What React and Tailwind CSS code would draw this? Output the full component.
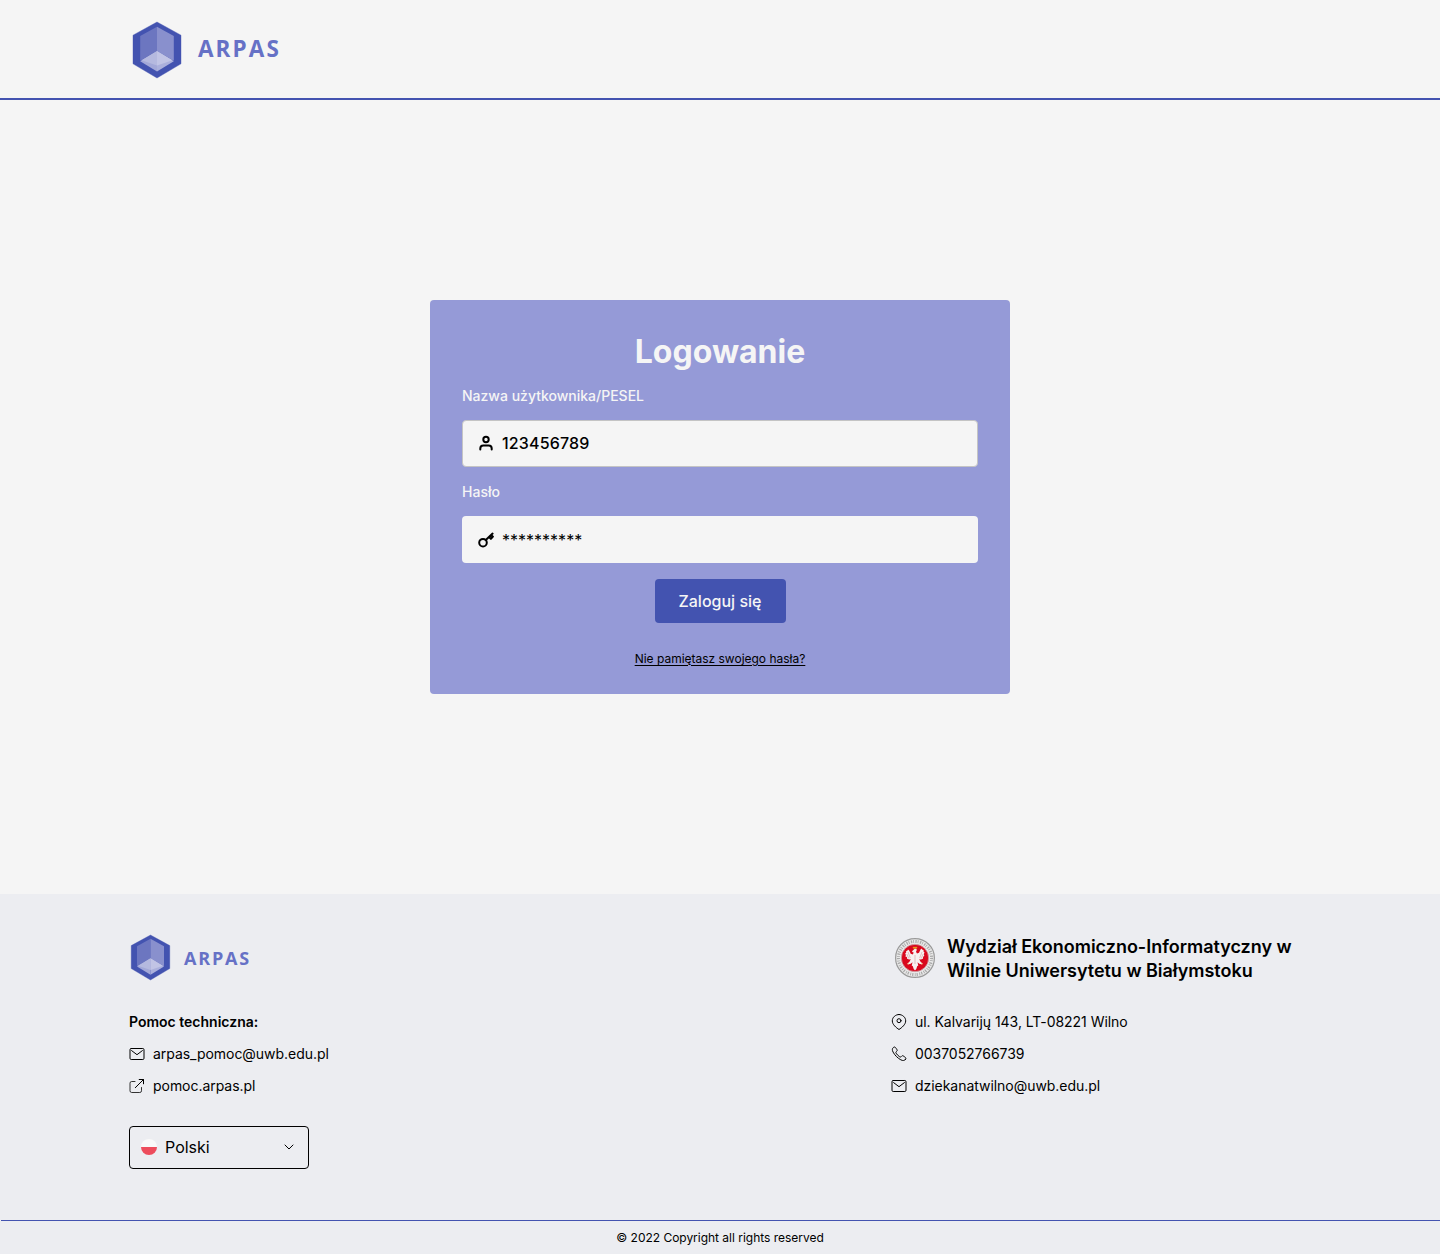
import React from "react";

function HexMark({ className }) {
  return (
    <svg viewBox="0 0 48 56" className={className} fill="none">
      <path d="M24 0 48 13.2V41.8L24 56 0 41.8V13.2Z" fill="#4353b0" stroke="#4353b0" strokeWidth=".4" strokeLinejoin="round" />
      <path d="M24 4.8V29L7.2 38.8V14Z" fill="#6c76c0" />
      <path d="M24 4.8V29L40.8 38.8V14Z" fill="#8990cd" />
      <path d="M24 29V49.4L7.2 39.2Z" fill="#a3a8d8" />
      <path d="M24 29V49.4L40.8 39.2Z" fill="#abb0dc" />
      <path d="M24 29V43.6L8.4 38.2Z" fill="#b5b9df" />
      <path d="M24 29V43.6L39.6 38.2Z" fill="#c1c4e5" />
    </svg>
  );
}

function Icon({ children, w = 1 }) {
  return (
    <svg
      viewBox="0 0 16 16"
      className="h-4 w-4 shrink-0"
      fill="none"
      stroke="#000"
      strokeWidth={w}
      strokeLinecap="round"
      strokeLinejoin="round"
    >
      {children}
    </svg>
  );
}

const Mail = () => (
  <Icon>
    <rect x="1" y="2.5" width="14" height="11" rx="1.2" />
    <path d="M2.600 4.600 8 8.700 13.400 4.600" />
  </Icon>
);
const External = () => (
  <Icon>
    <path
      d="M6 3.500H2.700A1.700 1.700 0 0 0 1 5.200v7.600a1.700 1.700 0 0 0 1.700 1.700h8.100a1.700 1.700 0 0 0 1.700-1.700V9.500"
      stroke="#333"
    />
    <path d="M10.200 1.500h4.300v4.300M6.300 9.700 14.500 1.500" />
  </Icon>
);
const Pin = () => (
  <Icon>
    <path d="M8 .5C4.600.5 1.300 3.200 1.300 6.900 1.300 10.500 5.300 13.800 8 15.500c2.700-1.700 6.700-5 6.700-8.600C14.700 3.200 11.400.5 8 .5Z" />
    <circle cx="8" cy="6.700" r="2" />
  </Icon>
);
const Phone = () => (
  <Icon>
    <path d="M14.300 13.600c-.9 1-2.300 1.400-4.500.2-1.500-.8-3-1.900-4.400-3.300S2.900 7.600 2.100 6.100C.9 3.900 1.300 2.500 2.200 1.700c.8-.8 1.500-.9 2.100-.3.500.5 1.300 1.600 1.700 2.300.4.700.2 1.200-.4 1.700-.8.6-.9 1.100-.5 1.800.8 1.300 2.300 2.800 3.600 3.600.7.400 1.200.3 1.800-.5.500-.6 1-.8 1.700-.4.700.4 1.800 1.200 2.300 1.700.6.600.5 1.300-.2 2Z" />
  </Icon>
);
const User = () => (
  <Icon w={2}>
    <circle cx="8" cy="4.500" r="2.700" />
    <path d="M2.300 14.500v-1c0-1.700 1.300-3 3-3h5.400c1.700 0 3 1.300 3 3v1" />
  </Icon>
);
const Key = () => (
  <Icon w={2}>
    <circle cx="5" cy="10.700" r="3.800" />
    <path d="M7.800 8 14.600 1.600M11 5l1.900 1.900 2-2.200-1.700-1.700" />
    <path d="M12.300 4.200 13.700 5.400" strokeWidth="1.500" />
  </Icon>
);

function Seal() {
  return (
    <svg viewBox="0 0 40 40" className="h-10 w-10 shrink-0">
      <circle cx="20" cy="20" r="19.400" fill="#e9e9e9" stroke="#9a9a9a" strokeWidth="1.200" />
      <circle cx="20" cy="20" r="16.600" fill="none" stroke="#858585" strokeWidth="3" strokeDasharray="1.200 1.100 .8 1.500" opacity=".65" />
      <circle cx="20" cy="20" r="13.700" fill="#d9081e" stroke="#c9b8ba" strokeWidth=".7" />
      <path
        d="M20 10.500c1.300 0 2 .8 1.700 1.800l-.7 1.500 1 1.700 2-.7 1.500-3.300 1.200-1 .7 1.200 1.200.3-.1 1.500 1 1-.7 1.500.5 1.500-1.200 1.500-.2 1.700-2 .8-1.700-.3 1.500 2.800 2 1.500-.7.9-2.700-.6-1.800-1.600.8 3.500-1 .4-1 3-1.300 1.400-1.300-1.400-1-3-1-.4.800-3.500-1.800 1.600-2.700.6-.7-.9 2-1.500 1.500-2.800-1.700.3-2-.8-.2-1.700L10.400 18.500l.5-1.500-.7-1.500 1-1-.1-1.500 1.200-.3.7-1.200 1.200 1 1.500 3.300 2 .7 1-1.700-.9-.8-.8.300.3-1.200Z"
        fill="#f7f1f1"
      />
      <path d="M13 14l2.300 6M11.800 16l2 4.500M27 14l-2.300 6M28.200 16l-2 4.500M20 17v9" stroke="#d59a9f" strokeWidth=".6" />
      <path d="M18.300 10.300l-.3-1.300 1.200.5.800-.7.800.7 1.200-.5-.3 1.300ZM12 26.300l1.800-1M28 26.300l-1.800-1" fill="#e5b51e" stroke="#e5b51e" strokeWidth=".4" />
    </svg>
  );
}

function Row({ icon, children }) {
  return (
    <div className="flex h-6 items-center gap-2 text-[14px] leading-6 tracking-[-0.040px]">
      {icon}
      <span className="whitespace-nowrap">{children}</span>
    </div>
  );
}

export default function App() {
  return (
    <div className="flex h-[1254px] w-[1440px] flex-col bg-[#f5f5f5] font-['Inter',sans-serif] text-black">
      <header className="flex h-[100px] shrink-0 items-center border-b-2 border-[#4353b0] pl-[133px]">
        <HexMark className="mt-[2px] h-14 w-12 overflow-visible" />
        <span className="ml-[17px] font-['Open_Sans',sans-serif] text-[22.500px] leading-none font-bold tracking-[2.100px] text-[#6671c6]">
          ARPAS
        </span>
      </header>

      <main className="flex h-[794px] shrink-0 items-center justify-center">
        <form className="flex h-[394px] w-[580px] flex-col items-center rounded bg-[#959ad7] px-8 pt-8">
          <h1 className="text-[32px] leading-10 font-bold text-[#f5f5f5]">Logowanie</h1>
          <label className="mt-3 w-full text-[14px] leading-6 font-medium text-[#f5f5f5]">Nazwa użytkownika/PESEL</label>
          <div className="mt-3 flex h-[47px] w-full items-center gap-2 rounded border border-[#c4c4c4] bg-[#f5f5f5] px-[15px] pb-px text-base font-medium tracking-[0.170px]">
            <User />
            <span>123456789</span>
          </div>
          <label className="mt-[13px] w-full text-[14px] leading-6 font-medium text-[#f5f5f5]">Hasło</label>
          <div className="mt-3 flex h-[47px] w-full items-center gap-2 rounded bg-[#f5f5f5] px-4 text-base">
            <Key />
            <span>**********</span>
          </div>
          <button type="button" className="mt-4 h-11 w-[131px] shrink-0 rounded bg-[#4353b0] text-base font-medium text-[#f5f5f5]">
            Zaloguj się
          </button>
          <a className="mt-7 text-[12px] leading-4 tracking-[-0.010px] underline underline-offset-2">
            Nie pamiętasz swojego hasła?
          </a>
        </form>
      </main>

      <footer className="flex h-[360px] shrink-0 flex-col bg-[#ecedf1]">
        <div className="flex h-[326px] shrink-0 justify-between pr-[149px] pl-[129px]">
          <div className="flex w-[240px] flex-col">
            <div className="mt-[41px] flex h-[46px] items-center pb-px pl-[2px]">
              <HexMark className="h-[45px] w-[39px] overflow-visible" />
              <span className="ml-[14px] font-['Open_Sans',sans-serif] text-[18px] leading-none font-bold tracking-[1.800px] text-[#6671c6]">
                ARPAS
              </span>
            </div>
            <div className="mt-[29px] flex flex-col gap-2">
              <div className="h-6 text-[14px] leading-6 font-semibold">Pomoc techniczna:</div>
              <Row icon={<Mail />}>arpas_pomoc@uwb.edu.pl</Row>
              <Row icon={<External />}>pomoc.arpas.pl</Row>
            </div>
            <div className="mt-7 flex h-[43px] w-[180px] items-center rounded border border-black px-[11px] pb-px text-base">
              <svg viewBox="0 0 16 16" className="h-4 w-4">
                <path d="M0 8a8 8 0 0 1 16 0Z" fill="#f9f9f9" />
                <path d="M0 8a8 8 0 0 0 16 0Z" fill="#ed4c5c" />
              </svg>
              <span className="ml-2 flex-1">Polski</span>
              <Icon>
                <path d="M4 6 8 10 12 6" />
              </Icon>
            </div>
          </div>
          <div className="flex w-[400px] flex-col">
            <div className="mt-[41px] flex h-[46px] items-center gap-3 pl-1">
              <Seal />
              <div className="mt-0.5 text-[18px] leading-6 font-semibold tracking-[-0.020px] whitespace-nowrap">
                Wydział Ekonomiczno-Informatyczny w
                <br />
                Wilnie Uniwersytetu w Białymstoku
              </div>
            </div>
            <div className="mt-[29px] flex flex-col gap-2">
              <Row icon={<Pin />}>ul. Kalvarijų 143, LT-08221 Wilno</Row>
              <Row icon={<Phone />}>0037052766739</Row>
              <Row icon={<Mail />}>dziekanatwilno@uwb.edu.pl</Row>
            </div>
          </div>
        </div>
        <div className="ml-px flex h-[34px] items-center justify-center border-t border-[#4353b0] pr-px text-[12px] tracking-[-0.020px]">
          © 2022 Copyright all rights reserved
        </div>
      </footer>
    </div>
  );
}
